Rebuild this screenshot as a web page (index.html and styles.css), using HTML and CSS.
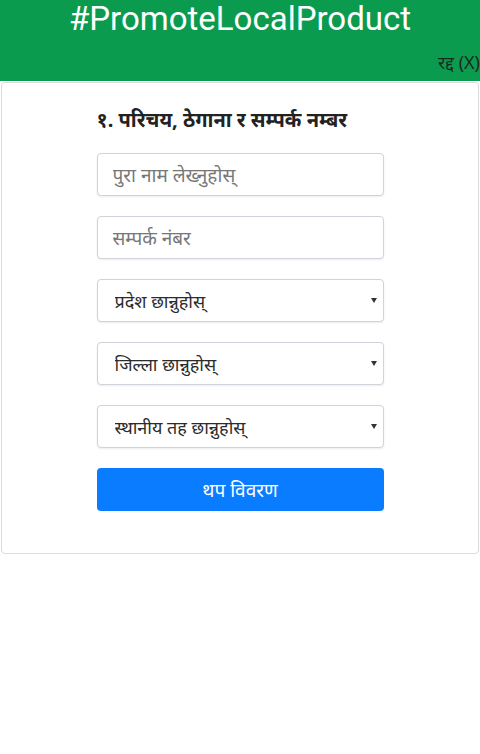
FILE: index.html
```html
<!DOCTYPE html>
<html lang="ne">
<head>
  <meta charset="UTF-8" />
  <meta name="viewport" content="width=device-width, initial-scale=1" />
  <title>#PromoteLocalProduct</title>
  <link rel="stylesheet" href="styles.css">
</head>
<body>

  <header class="topbar">
    <h1>#PromoteLocalProduct</h1>
    <a class="cancel" href="#">रद्द (X)</a>
  </header>

  <div class="card">
    <form class="form">
      <h2>१. परिचय, ठेगाना र सम्पर्क नम्बर</h2>

      <input type="text" class="field" placeholder="पुरा नाम लेख्नुहोस्">
      <input type="text" class="field" placeholder="सम्पर्क नंबर">

      <div class="select-wrap">
        <select class="field">
          <option>प्रदेश छान्नुहोस्</option>
        </select>
      </div>
      <div class="select-wrap">
        <select class="field">
          <option>जिल्ला छान्नुहोस्</option>
        </select>
      </div>
      <div class="select-wrap">
        <select class="field">
          <option>स्थानीय तह छान्नुहोस्</option>
        </select>
      </div>

      <button type="button">थप विवरण</button>
    </form>
  </div>

</body>
</html>
```

FILE: styles.css
```css
body {
  margin: 0;
  padding: 0;
  font-family: 'Noto Sans', 'Liberation Sans', sans-serif;
  background: #fff;
  color: #212529;
}

.topbar {
  background: #0b9b4f;
  height: 81px;
  display: flex;
  flex-direction: column;
}

.topbar h1 {
  margin: 0;
  font-family: 'Roboto', 'Liberation Sans', sans-serif;
  font-weight: 400;
  font-size: 33px;
  line-height: 38px;
  color: #fff;
  text-align: center;
}

.cancel {
  align-self: flex-end;
  margin-top: 12px;
  font-size: 18px;
  line-height: 24px;
  color: #1b2a20;
  text-decoration: none;
}

.card {
  margin: 1px 1px 0 1px;
  border: 1px solid #dcdcdc;
  border-radius: 4px;
  padding: 24px 0 42px;
}

.form {
  width: 287px;
  margin: 0 auto;
  display: flex;
  flex-direction: column;
  gap: 20px;
}

.form h2 {
  margin: 0;
  font-size: 20px;
  font-weight: 700;
  line-height: 26px;
  color: #222;
}

.field {
  box-sizing: border-box;
  width: 100%;
  height: 43px;
  padding: 0 15px;
  border: 1px solid #ced4da;
  border-radius: 4px;
  font-family: inherit;
  font-size: 19px;
  color: #333;
  background: #fff;
  box-shadow: 0 1px 2px rgba(0, 0, 0, 0.08);
}

.field::placeholder {
  color: #777;
}

select.field {
  appearance: none;
  -webkit-appearance: none;
  padding-left: 17px;
  font-size: 18px;
  color: #2b2b2b;
}

.select-wrap {
  position: relative;
}

.select-wrap::after {
  content: "";
  position: absolute;
  right: 7px;
  top: 19px;
  border-left: 3px solid transparent;
  border-right: 3px solid transparent;
  border-top: 5px solid #333;
  pointer-events: none;
}

button {
  height: 43px;
  border: none;
  border-radius: 4px;
  background: #0a7cff;
  color: #fff;
  font-family: inherit;
  font-size: 19px;
  cursor: pointer;
}
```
